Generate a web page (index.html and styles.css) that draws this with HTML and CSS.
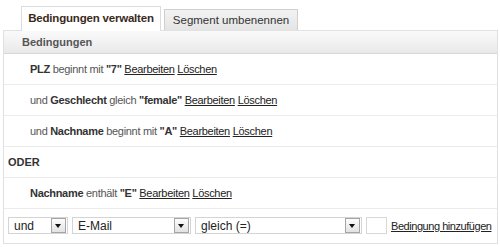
FILE: index.html
```html
<!DOCTYPE html>
<html lang="de">
<head>
  <meta charset="UTF-8">
  <title>Segment bearbeiten</title>
  <link rel="stylesheet" href="styles.css">
</head>
<body>

  <div class="segment">
    <!-- Reiter -->
    <div class="tabs">
      <div class="tab active">Bedingungen verwalten</div>
      <div class="tab">Segment umbenennen</div>
    </div>

    <!-- Bedingungsliste -->
    <div class="panel">
      <div class="panel-header">Bedingungen</div>

      <div class="row cond"><b>PLZ</b> beginnt mit <b>"7"</b> <a href="#">Bearbeiten</a> <a href="#">Löschen</a></div>
      <div class="row cond">und <b>Geschlecht</b> gleich <b>"female"</b> <a href="#">Bearbeiten</a> <a href="#">Löschen</a></div>
      <div class="row cond">und <b>Nachname</b> beginnt mit <b>"A"</b> <a href="#">Bearbeiten</a> <a href="#">Löschen</a></div>
      <div class="row group">ODER</div>
      <div class="row cond"><b>Nachname</b> enthält <b>"E"</b> <a href="#">Bearbeiten</a> <a href="#">Löschen</a></div>

      <div class="add">
        <div class="select sel-op"><span>und</span><i class="arrow"></i></div>
        <div class="select sel-field"><span>E-Mail</span><i class="arrow"></i></div>
        <div class="select sel-cmp"><span>gleich (=)</span><i class="arrow"></i></div>
        <div class="value"></div>
        <a href="#" class="add-link">Bedingung hinzufügen</a>
      </div>
    </div>
  </div>

</body>
</html>
```

FILE: styles.css
```css
* { margin:0; padding:0; box-sizing:border-box; }
body { font-family: "Liberation Sans", Arial, sans-serif; background:#fff; color:#444; }

.segment { padding: 6px 2px 0 3px; width: 500px; }

/* — Reiter — */
.tabs {
  display: flex;
  align-items: flex-end;
  gap: 3px;
  padding-left: 18px;
  height: 24px;
}
.tab {
  width: 134px;
  height: 21px;
  border: 1px solid #cfcfcf;
  border-bottom: none;
  background: linear-gradient(#f3f3f3, #e4e4e4);
  font-size: 11.5px;
  color: #333;
  text-align: center;
  line-height: 20px;
  white-space: nowrap;
}
.tab.active {
  width: 140px;
  height: 25px;
  margin-bottom: -1px;
  position: relative;
  z-index: 1;
  background: #fff;
  border-color: #dcdcdc;
  font-weight: bold;
  color: #3a2a1c;
  line-height: 23px;
  letter-spacing: -0.2px;
}

/* — Panel — */
.panel {
  border: 1px solid #e0e0e0;
  border-top: none;
  font-size: 11px;
}
.panel-header {
  height: 24px;
  border-top: 1px solid #e2e2e2;
  border-bottom: 1px solid #d8d8d8;
  background: linear-gradient(#fafafa, #e9e9e9);
  padding-left: 18px;
  line-height: 22px;
  font-weight: bold;
  color: #555;
}
.row {
  height: 31px;
  line-height: 30px;
  border-bottom: 1px solid #ececec;
  color: #555;
  white-space: nowrap;
  letter-spacing: -0.3px;
}
.row b { color: #333; }
.cond { padding-left: 26px; }
.group { padding-left: 4px; font-weight: bold; color: #333; letter-spacing: 0; }
.panel a { color: #222; text-decoration: underline; }

/* — Neue Bedingung — */
.add {
  height: 34px;
  display: flex;
  align-items: center;
  padding: 0 4px 1px 4px;
  gap: 4px;
}
.select {
  flex-shrink: 0;
  height: 17px;
  border: 1px solid #d4d4d4;
  background: #fff;
  display: flex;
  align-items: center;
  justify-content: space-between;
  padding: 0 1px 0 5px;
  font-size: 12px;
  color: #222;
}
.sel-op { width: 60px; }
.sel-field { width: 119px; }
.sel-cmp { width: 167px; }
.arrow {
  width: 15px;
  height: 15px;
  border: 1px solid #a5a5a5;
  background: linear-gradient(#fdfdfd, #e2e2e2);
  position: relative;
}
.arrow::after {
  content: '';
  position: absolute;
  left: 3px;
  top: 5px;
  border-left: 3.5px solid transparent;
  border-right: 3.5px solid transparent;
  border-top: 4px solid #111;
}
.value {
  flex-shrink: 0;
  width: 21px;
  height: 17px;
  border: 1px solid #d8d8d8;
  background: #fff;
}
.add-link { white-space: nowrap; letter-spacing: -0.45px; }
```
